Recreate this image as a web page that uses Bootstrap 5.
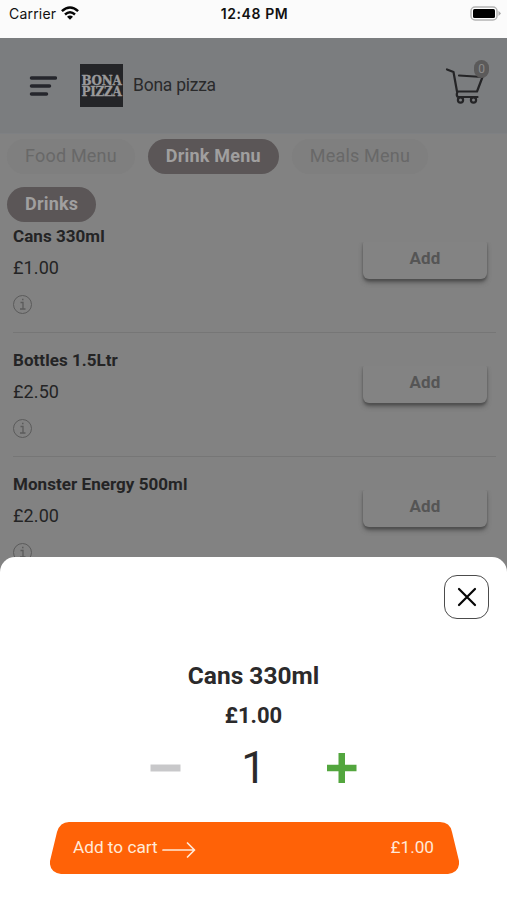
<!DOCTYPE html>
<html lang="en">
<head>
<meta charset="utf-8">
<meta name="viewport" content="width=device-width, initial-scale=1">
<title>Bona pizza</title>
<link href="https://cdn.jsdelivr.net/npm/bootstrap@5.3.0/dist/css/bootstrap.min.css" rel="stylesheet">
<style>
  body { font-family: Roboto, sans-serif; color: #242425; background: #828282; }
  .screen { height: 900px; }
  .status { height: 38px; background: #fbfbfb; color: #111; font: 14px/28px Inter, sans-serif; padding: 0 5px 0 9px; align-items: flex-start; }
  .status > * { flex: 1 1 0; height: 28px; }
  .status .carrier { letter-spacing: .2px; }
  .status .clock { font-weight: 600; letter-spacing: .6px; margin-right: 2px; }
  .top-bar { height: 96px; background: #7b7d7f; padding: 0 17px 0 29px; border-bottom: 1px solid #7e8083; }
  .logo { width: 43px; height: 43px; margin-left: 23px; background: #242528; color: #9a9a9b; font: bold 12px/11px "DejaVu Serif", serif; padding-top: 11px; }
  .logo span { display: block; height: 11px; line-height: 12px; letter-spacing: -.3px; -webkit-text-stroke: .3px #9a9a9b; }
  .shop-name { font-size: 17.5px; margin-left: 10px; color: #2a2a2b; letter-spacing: -.25px; line-height: 24px; padding-bottom: 1px; }
  .cart-count { width: 15px; height: 18px; right: 1px; top: -6px; background: #5b5a5a; color: #8b8b8b; font-size: 12px; line-height: 18px; border-radius: 8px; }
  .pills { padding: 5px 7px 0; gap: 13px; }
  .sub-pills { padding-top: 13px; }
  .pill { height: 35px; line-height: 34px; padding: 0 18px; font-size: 18px; border-radius: 18px; background: #7f7f7f; color: #686868; letter-spacing: .2px; white-space: nowrap; }
  .pill.on { background: #5b5657; color: #a09f9f; font-weight: 700; }
  .menu-list { padding: 0 11px 0 13px; }
  .dish { height: 124.3px; border-bottom: 1px solid #767676; padding-right: 9px; }
  .dish:first-child { height: 111px; }
  .dish:first-child .dish-text { padding-top: 3px; }
  .dish:first-child .add-btn { margin-top: 16px; }
  .dish-text { padding-top: 16px; }
  .dish-name { font-size: 17px; font-weight: 700; line-height: 22px; letter-spacing: .05px; }
  .dish-price { font-size: 18px; line-height: 22px; margin-top: 9.5px; letter-spacing: .1px; }
  .info { display: block; margin-top: 15.5px; margin-left: -1px; }
  .add-btn { width: 124px; height: 41px; margin-top: 29px; border: 0; border-radius: 6px; background: #838383; color: #555; font-size: 17px; font-weight: 700; letter-spacing: .2px; padding: 0; box-shadow: 0 4px 5px -1px #4d4d4d, 0 2px 2px #616161; clip-path: inset(4px -8px -12px -8px); }
  .sheet { left: 0; right: 0; bottom: 0; height: 343px; background: #fff; border-radius: 15px 15px 0 0; color: #2b2a2b; }
  .close-btn { width: 45px; height: 44px; margin: 18px 18px 0 auto; border: 1.5px solid #4c4c4c; border-radius: 13px; background: #fff; padding: 0; }
  .sheet-title { font-size: 24.5px; font-weight: 700; line-height: 30px; margin-top: 42px; }
  .sheet-price { font-size: 22px; font-weight: 700; line-height: 26px; margin-top: 12px; }
  .stepper { height: 48px; margin-top: 15px; padding: 0 150px; }
  .amount { font-size: 44px; line-height: 48px; font-weight: 400; }
  .order-btn { width: 409px; height: 52px; margin: 30px 0 0 50px; padding: 0 25px 0 23px; border: 0; background: none; color: #ffe9d8; font-size: 17.2px; }
  .order-shape { left: 0; top: 0; }
  .order-btn > span { position: relative; }
</style>
</head>
<body>
<div class="screen position-relative overflow-hidden">
  <div class="status d-flex">
    <div class="carrier d-flex align-items-center">Carrier
      <svg class="ms-1" width="20" height="16" viewBox="0 0 20 16"><g fill="none" stroke="#050505" stroke-width="2.5"><path d="M1.9 5.2Q10 -2.300 18.100 5.200"/><path d="M5 8.500Q10 4.100 15 8.500"/></g><path d="M7 10.700Q10 8.200 13 10.700L10 13.700Z" fill="#050505"/></svg>
    </div>
    <div class="clock text-center">12:48 PM</div>
    <div class="d-flex justify-content-end align-items-center">
      <svg width="32" height="16" viewBox="0 0 32 16"><rect x="1" y="1" width="26" height="13" rx="4" fill="#fff" stroke="#b4b4b4" stroke-width="1.5"/><rect x="3" y="3" width="22" height="9" rx="1.5"/><path d="M28.5 4.800L31 7.500l-2.500 2.500Z" fill="#aaa"/></svg>
    </div>
  </div>
  <header class="top-bar d-flex align-items-center">
    <svg width="28" height="22" viewBox="0 0 28 22" stroke="#25262c" stroke-width="3.5" stroke-linecap="round"><path d="M2.5 3H26.500M2.500 11H20.500M2.500 19H17.500"/></svg>
    <div class="logo text-center"><span>BONA</span><span>PIZZA</span></div>
    <div class="shop-name">Bona pizza</div>
    <div class="ms-auto position-relative">
      <svg class="d-block" width="45" height="40" viewBox="0 0 45 40" fill="none" stroke="#242426" stroke-width="2.2" stroke-linecap="round" stroke-linejoin="round"><path d="M2 3.500L8.500 6L12 25.500H32L37.500 11L14 9.500M12.500 25.500Q10.500 31 14 31H32.500"/><circle cx="15.500" cy="34" r="2.600"/><circle cx="28.500" cy="34" r="2.600"/></svg>
      <span class="cart-count position-absolute text-center">0</span>
    </div>
  </header>
  <nav class="pills d-flex">
    <span class="pill">Food Menu</span><span class="pill on">Drink Menu</span><span class="pill">Meals Menu</span>
  </nav>
  <div class="pills sub-pills d-flex"><span class="pill on">Drinks</span></div>
  <main class="menu-list">
    <div class="dish d-flex justify-content-between align-items-start">
      <div class="dish-text"><div class="dish-name">Cans 330ml</div><div class="dish-price">£1.00</div>
        <svg class="info" width="21" height="21" viewBox="0 0 21 21" fill="none" stroke="#5b5b5b"><circle cx="10.500" cy="10.500" r="9"/><path d="M8.500 8.500h2.500v6.500M8 15h5.500M10 5.500h1.500" stroke-width="1.300"/></svg></div>
      <button class="add-btn">Add</button>
    </div>
    <div class="dish d-flex justify-content-between align-items-start">
      <div class="dish-text"><div class="dish-name">Bottles 1.5Ltr</div><div class="dish-price">£2.50</div>
        <svg class="info" width="21" height="21" viewBox="0 0 21 21" fill="none" stroke="#5b5b5b"><circle cx="10.500" cy="10.500" r="9"/><path d="M8.500 8.500h2.500v6.500M8 15h5.500M10 5.500h1.500" stroke-width="1.300"/></svg></div>
      <button class="add-btn">Add</button>
    </div>
    <div class="dish d-flex justify-content-between align-items-start">
      <div class="dish-text"><div class="dish-name">Monster Energy 500ml</div><div class="dish-price">£2.00</div>
        <svg class="info" width="21" height="21" viewBox="0 0 21 21" fill="none" stroke="#5b5b5b"><circle cx="10.500" cy="10.500" r="9"/><path d="M8.500 8.500h2.500v6.500M8 15h5.500M10 5.500h1.500" stroke-width="1.300"/></svg></div>
      <button class="add-btn">Add</button>
    </div>
  </main>
  <section class="sheet position-absolute">
    <button class="close-btn d-flex align-items-center justify-content-center" aria-label="Close">
      <svg width="20" height="20" viewBox="0 0 20 20" stroke="#050505" stroke-width="2.2" stroke-linecap="round"><path d="M2 2L18 18M18 2L2 18"/></svg>
    </button>
    <div class="sheet-title text-center">Cans 330ml</div>
    <div class="sheet-price text-center">£1.00</div>
    <div class="stepper d-flex justify-content-between align-items-center">
      <svg width="31" height="30" viewBox="0 0 31 30"><path d="M.5 11.500H30.500V18.500H.5Z" fill="#c8c8ca"/></svg>
      <span class="amount">1</span>
      <svg width="31" height="30" viewBox="0 0 31 30"><path d="M1 11.700H12.500V0H19V11.700H30.500V18.300H19V30H12.500V18.300H1Z" fill="#53a63e"/></svg>
    </div>
    <button class="order-btn position-relative d-flex justify-content-between align-items-center">
      <svg class="order-shape position-absolute" width="409" height="52" viewBox="0 0 409 52"><path d="M19 0H390Q400 0 402 10L409 39Q410 50 398 52H11Q-1 50 0 39L7 10Q10 0 19 0Z" fill="#ff6207"/></svg>
      <span class="d-flex align-items-center">Add to cart
        <svg class="mt-1 ms-1" width="35" height="18" viewBox="0 0 35 18" fill="none" stroke="#ffe9d8" stroke-width="1.7" stroke-linecap="round" stroke-linejoin="round"><path d="M1 9H32.500M25.500 2L32.500 9L25.500 16"/></svg></span>
      <span>£1.00</span>
    </button>
  </section>
</div>
<script src="https://cdn.jsdelivr.net/npm/bootstrap@5.3.0/dist/js/bootstrap.bundle.min.js"></script>
</body>
</html>
